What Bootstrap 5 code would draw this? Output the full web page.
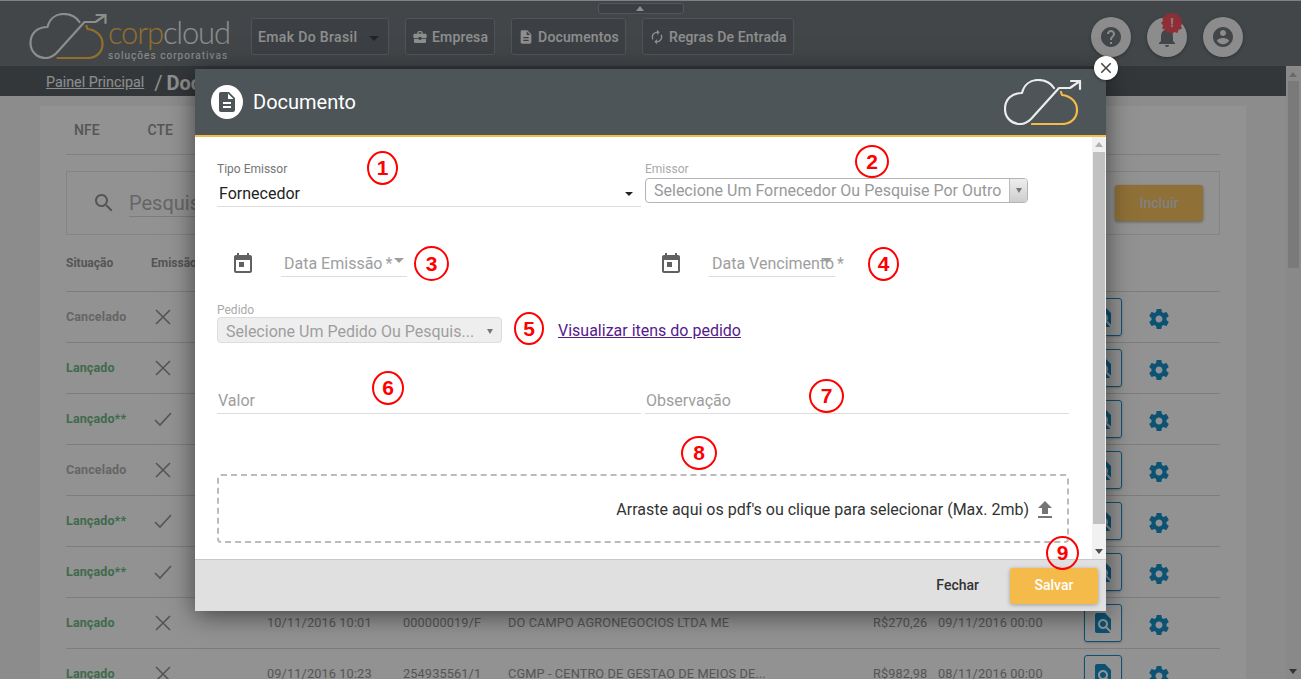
<!DOCTYPE html>
<html lang="pt-BR">
<head>
    <meta charset="UTF-8">
    <meta name="viewport" content="width=device-width, initial-scale=1.0">
    <title>Documento</title>
    <link href="https://cdn.jsdelivr.net/npm/bootstrap@5.3.2/dist/css/bootstrap.min.css" rel="stylesheet">
    <style>
        html, body { height: 100%; overflow: hidden; }
        body { font-family: Roboto, "Liberation Sans", sans-serif; background: #e9e9e9; position: relative; }

        /* topo da pagina */
        .top-bar { height: 66px; background: #6e767b; border-top: 1px solid #d8d8d8; position: relative; }
        .top-tab { position: absolute; left: 598px; top: 2px; width: 86px; height: 11px; border: 1px solid #8a9196; border-radius: 3px; background: #646a70; }
        .top-tab::after { content: ""; position: absolute; left: 37px; top: 2px; border: 4px solid transparent; border-top: 0; border-bottom: 5px solid #ededed; }
        .brand { width: 201px; margin-left: 29px; margin-top: 12px; height: 46px; }
        .brand-text { width: 122px; flex: none; }
        .brand-name { font-family: Lato, sans-serif; font-weight: 300; font-size: 31px; line-height: 34px; letter-spacing: -1.2px; color: #ececec; margin-top: 2px; }
        .brand-name b { font-weight: 300; color: #f4bb4a; }
        .brand-sub { font-size: 10px; line-height: 10px; letter-spacing: 1.05px; color: #ececec; margin-top: 2px; white-space: nowrap; }
        .cloud-line { fill: none; stroke: #ececec; stroke-width: 2.2; stroke-linecap: round; stroke-linejoin: round; }
        .cloud-gold { fill: none; stroke: #f4bb4a; stroke-width: 2.2; stroke-linecap: round; stroke-linejoin: round; }
        .top-nav { margin-left: 21px; margin-top: 17px; }
        .top-btn { height: 37px; background: #646a70; border: 1px solid #858c91; border-radius: 3px; color: #ededed; font-size: 14px; font-weight: 500; letter-spacing: .15px; padding: 2px 6px 0; display: flex; align-items: center; gap: 4px; white-space: nowrap; }
        .top-btn:first-child { width: 138px; justify-content: space-between; letter-spacing: .35px; }
        .top-btn svg { width: 16px; height: 16px; flex: none; fill: #ededed; margin-top: -2px; }
        .top-caret { border: 5px solid transparent; border-top: 5px solid #3a3d40; border-bottom: 0; margin: 2px 7px 0 8px; }
        .round-group { gap: 16px; margin-right: 58px; margin-top: 16px; }
        .round-btn { width: 40px; height: 40px; border-radius: 50%; background: #e9e9e9; display: flex; align-items: center; justify-content: center; position: relative; box-shadow: 0 1px 4px rgba(0,0,0,.3); }
        .round-btn svg { width: 24px; height: 24px; fill: #6e767b; }
        .round-btn .burst { position: absolute; left: 14px; top: -5px; width: 22px; height: 22px; fill: #ed4e5a; }
        .burst-mark { position: absolute; left: 14px; top: -5px; width: 22px; line-height: 22px; text-align: center; color: #f3d5d5; font-size: 13px; font-weight: 700; }

        .crumb-bar { height: 30px; background: #585d62; color: #ededed; padding: 4px 0 0 46px; margin-right: 15px; display: flex; align-items: center; white-space: nowrap; }
        .crumb-bar a { color: #ededed; font-size: 14.3px; }
        .crumb-bar span { font-size: 20px; margin-left: 10px; }
        .crumb-bar strong { font-size: 20px; margin-left: 4px; }

        /* conteudo atras do modal */
        .page-panel { margin: 10px 0 0 40px; width: 1206px; background: #f3f3f3; padding: 0 26px; }
        .tab-row { height: 49px; border-bottom: 1px solid #d8d8d8; padding-left: 8px; gap: 48px; color: #8e8e8e; font-size: 14px; font-weight: 500; }
        .search-box { height: 64px; margin-top: 16px; border: 1px solid #dcdcdc; padding: 0 16px 0 25px; }
        .search-box svg { width: 24px; height: 24px; fill: #8e8e8e; }
        .search-input { flex: 1; margin-left: 13px; font-size: 20px; color: #aaa; border-bottom: 1px solid #d0d0d0; line-height: 26px; }
        .add-btn { width: 88px; height: 36px; margin-left: 24px; background: #eebb5c; border-radius: 3px; color: #d8d8d8; font-size: 14px; font-weight: 500; box-shadow: 0 1px 3px rgba(0,0,0,.35); }
        .doc-table { table-layout: fixed; width: 1154px; margin: 0; --bs-table-bg: transparent; --bs-table-color: #8e8e8e; --bs-table-border-color: #d0d0d0; }
        .doc-table th, .doc-table td { padding: 0; vertical-align: middle; font-size: 12.75px; white-space: nowrap; overflow: hidden; }
        .doc-table thead th { height: 56px; color: #8e8e8e; font-weight: 700; font-size: 12px; }
        .doc-table td { height: 51px; letter-spacing: .12px; }
        .doc-table td.st-green { color: #69b27f; font-weight: 700; font-size: 12.5px; padding-top: 2px; }
        .doc-table td.st-gray { color: #aaa; font-weight: 700; font-size: 12.5px; padding-top: 2px; }
        .mark-x { width: 18px; height: 18px; stroke: #8e8e8e; stroke-width: 1.6; fill: none; margin-left: 3px; display: block; }
        .view-btn { width: 38px; height: 38px; margin-left: 1px; border: 1px solid #1589bf; border-radius: 3px; display: flex; align-items: center; justify-content: center; box-shadow: 0 1px 2px rgba(0,0,0,.2); }
        .view-btn svg { width: 24px; height: 24px; fill: #1589bf; }
        .gear-icon { width: 24px; height: 24px; fill: #1589bf; display: block; margin-left: -1px; position: relative; top: 2px; }
        .c-a { width: 85px; } .c-b { width: 116px; } .c-c { width: 136px; } .c-d { width: 105px; }
        .c-e { width: 365px; } .c-f { width: 65px; } .c-g { width: 145px; } .c-h { width: 65px; } .c-i { width: 72px; }

        .page-scroll { position: absolute; right: 0; top: 67px; bottom: 0; width: 15px; background: #e4e4e4; }
        .page-scroll i { position: absolute; left: 2px; top: 14px; width: 11px; height: 187px; background: #cbcbcb; }
        .page-scroll::before { content: ""; position: absolute; left: 3px; top: 5px; border: 4px solid transparent; border-top: 0; border-bottom: 5px solid #b0b0b0; }
        .page-scroll::after { content: ""; position: absolute; left: 3px; bottom: 5px; border: 4px solid transparent; border-bottom: 0; border-top: 5px solid #555; }

        .dim-layer { position: absolute; inset: 0; background: rgba(0,0,0,.4); }

        /* modal */
        .doc-modal { position: absolute; left: 195px; top: 69px; width: 911px; height: 542px; background: #fff; display: flex; flex-direction: column; box-shadow: 0 4px 24px rgba(0,0,0,.55); }
        .doc-head { height: 68px; flex: none; background: #4d5558; border-bottom: 2px solid #f4bb4a; padding: 0 24px 0 16px; color: #fff; }
        .doc-head-icon { width: 32px; height: 34px; border-radius: 50%; background: #fff; }
        .doc-head-icon svg { width: 24px; height: 24px; fill: #4d5558; }
        .doc-title { font-size: 20px; margin-left: 10px; }
        .doc-logo { width: 78px; height: 46px; margin-top: -1px; }
        .doc-logo .cloud-line { stroke: #fff; }
        .doc-logo .cloud-gold { stroke: #fbb62c; }
        .close-dot { position: absolute; right: -12px; top: -13px; width: 24px; height: 24px; border-radius: 50%; background: #fff; box-shadow: 0 1px 3px rgba(0,0,0,.4); }
        .close-dot svg { width: 18px; height: 18px; fill: #444; }
        .doc-body { flex: 1; min-height: 0; }
        .doc-form { flex: 1; padding: 25px 23px 0 22px; font-size: 16px; }
        .form-line { gap: 4px; }
        .form-col { width: 424px; flex: none; }
        .mini-label { font-size: 12px; line-height: 14px; color: #757575; display: block; }
        .mini-label.is-off { color: #aaa; }
        .type-select { height: 31px; border-bottom: 1px solid #ddd; padding: 5px 8px 0 2px; color: #222; }
        .small-caret { border: 4px solid transparent; border-top: 4px solid #222; border-bottom: 0; }
        .combo-box { height: 25px; width: 383px; margin-top: 2px; border: 1px solid #b4b4b4; border-radius: 4px; padding-left: 8px; color: #999; white-space: nowrap; overflow: hidden; }
        .combo-text { flex: 1; padding-top: 1px; }
        .combo-arrow { width: 18px; height: 24px; background: linear-gradient(#eee, #ccc); border-left: 1px solid #bbb; }
        .combo-arrow i, .order-box i { display: block; border: 3.5px solid transparent; border-top: 5px solid #777; border-bottom: 0; }
        .date-field { margin-top: 43px; height: 27px; }
        .date-col { width: 428px; flex: none; padding-left: 14px; }
        .date-col + .date-col { width: 424px; }
        .date-col > svg { width: 24px; height: 24px; fill: #616161; }
        .date-input { width: 126px; margin-left: 26px; height: 27px; border-bottom: 1px solid #ddd; color: #9e9e9e; padding: 0 0 0 3px; position: relative; white-space: nowrap; line-height: 28px; font-size: 16px; }
        .date-input i { position: absolute; right: 3px; top: 8px; border: 5px solid transparent; border-top: 5px solid #9e9e9e; border-bottom: 0; }
        .req-mark { margin-left: 3px; }
        .order-line { margin-top: 26px; }
        .order-box { width: 285px; height: 26px; background: #eee; border: 1px solid #ddd; border-radius: 4px; color: #9e9e9e; padding: 3px 8px 0; white-space: nowrap; }
        .order-link { color: #551a8b; font-size: 16px; margin-left: 56px; position: relative; top: 1px; }
        .plain-field { height: 27px; border-bottom: 1px solid #ddd; color: #9e9e9e; padding-left: 1px; line-height: 27px; }
        .value-line { margin-top: 44px; }
        .drop-zone { margin-top: 60px; height: 69px; border: 2px dashed #bbb; border-radius: 4px; padding: 2px 10px 0 0; color: #333; font-size: 16px; gap: 4px; }
        .drop-zone svg { width: 24px; height: 24px; fill: #757575; }
        .fake-scroll { width: 14px; flex: none; background: #f1f1f1; position: relative; }
        .fake-scroll i { position: absolute; left: 1px; top: 15px; width: 12px; height: 372px; background: #c1c1c1; }
        .fake-scroll::before { content: ""; position: absolute; left: 3px; top: 5px; border: 4px solid transparent; border-top: 0; border-bottom: 5px solid #b0b0b0; }
        .fake-scroll::after { content: ""; position: absolute; left: 3px; bottom: 5px; border: 4px solid transparent; border-bottom: 0; border-top: 5px solid #505050; }
        .doc-foot { height: 52px; flex: none; background: #e0e0e0; border-top: 1px solid #c8c8c8; padding-right: 8px; gap: 31px; font-size: 14px; font-weight: 500; }
        .foot-close { color: #333; }
        .foot-save { width: 88px; height: 36px; background: #f4bb4a; color: #fff; border-radius: 3px; box-shadow: 0 1px 4px rgba(0,0,0,.3); }

        /* numeros marcados a mao */
        .ann { position: absolute; width: 31px; height: 34px; border: 2px solid #f00; border-radius: 50%; color: #f00; font: 700 21px/30px "Liberation Sans", sans-serif; text-align: center; background: #fff; }
        .ann-1 { left: 172px; top: 82px; }
        .ann-2 { left: 660px; top: 76px; width: 34px; height: 33px; }
        .ann-3 { left: 219px; top: 177px; width: 35px; height: 35px; line-height: 31px; }
        .ann-4 { left: 673px; top: 178px; }
        .ann-5 { left: 319px; top: 243px; width: 30px; height: 33px; }
        .ann-6 { left: 177px; top: 302px; width: 32px; }
        .ann-7 { left: 614px; top: 310px; width: 35px; }
        .ann-8 { left: 486px; top: 367px; width: 36px; }
        .ann-9 { left: 851px; top: 467px; width: 33px; z-index: 2; background: transparent; }
    </style>
</head>
<body>

<svg width="0" height="0" class="d-block position-absolute">
    <symbol id="i-doc" viewBox="0 0 24 24"><path d="M14 2H6c-1.1 0-1.99.9-1.99 2L4 20c0 1.1.89 2 1.99 2H18c1.1 0 2-.9 2-2V8l-6-6zm2 16H8v-2h8v2zm0-4H8v-2h8v2zm-3-5V3.5L18.5 9H13z"/></symbol>
    <symbol id="i-cal" viewBox="0 0 24 24"><path d="M16 1v2H8V1H6v2H5c-1.11 0-2 .9-2 2v14c0 1.1.89 2 2 2h14c1.1 0 2-.9 2-2V5c0-1.1-.9-2-2-2h-1V1h-2zm3 18H5V8h14v11zM8 10h5v5H8z"/></symbol>
    <symbol id="i-find" viewBox="0 0 24 24"><path d="M20 19.59V8l-6-6H6c-1.1 0-1.99.9-1.99 2L4 20c0 1.1.89 2 1.99 2H18c.45 0 .85-.15 1.19-.4l-4.43-4.43c-.8.52-1.74.83-2.76.83-2.76 0-5-2.24-5-5s2.24-5 5-5 5 2.24 5 5c0 1.02-.31 1.96-.83 2.75L20 19.59zM9 13c0 1.66 1.34 3 3 3s3-1.34 3-3-1.34-3-3-3-3 1.34-3 3z"/></symbol>
    <symbol id="i-gear" viewBox="0 0 24 24"><path d="M19.43 12.98c.04-.32.07-.64.07-.98s-.03-.66-.07-.98l2.11-1.65c.19-.15.24-.42.12-.64l-2-3.46c-.12-.22-.39-.3-.61-.22l-2.49 1c-.52-.4-1.08-.73-1.69-.98l-.38-2.65C14.46 2.18 14.25 2 14 2h-4c-.25 0-.46.18-.49.42l-.38 2.65c-.61.25-1.17.59-1.69.98l-2.49-1c-.23-.09-.49 0-.61.22l-2 3.46c-.13.22-.07.49.12.64l2.11 1.65c-.04.32-.07.65-.07.98s.03.66.07.98l-2.11 1.65c-.19.15-.24.42-.12.64l2 3.46c.12.22.39.3.61.22l2.49-1c.52.4 1.08.73 1.69.98l.38 2.65c.03.24.24.42.49.42h4c.25 0 .46-.18.49-.42l.38-2.65c.61-.25 1.17-.59 1.69-.98l2.49 1c.23.09.49 0 .61-.22l2-3.46c.12-.22.07-.49-.12-.64l-2.11-1.65zM12 15.5c-1.93 0-3.5-1.57-3.5-3.5s1.57-3.5 3.5-3.5 3.5 1.57 3.5 3.5-1.57 3.5-3.5 3.5z"/></symbol>
    <symbol id="i-cloud" viewBox="0 0 78 46">
        <path class="cloud-line" d="M50 9C46 3 40 1 34 1 26 1 20 6 18 14 8 14 1 20 1 30 1 39 8 45 16 45 21 45 24 43 27 40L55 9H66L76 2M67 2H76V10"/>
        <path class="cloud-gold" d="M28 45H58C67 45 73 39 73 31 73 22 66 17 58 16L57 13"/>
    </symbol>
</svg>

<header class="top-bar d-flex align-items-start">
    <div class="top-tab"></div>
    <div class="brand d-flex">
        <svg class="flex-shrink-0" width="79" height="46"><use href="#i-cloud"/></svg>
        <div class="brand-text">
            <div class="brand-name"><b>corp</b>cloud</div>
            <div class="brand-sub">soluções corporativas</div>
        </div>
    </div>
    <nav class="d-flex gap-3 top-nav">
        <div class="top-btn">Emak Do Brasil <span class="top-caret"></span></div>
        <div class="top-btn">
            <svg viewBox="0 0 24 24"><path d="M10 16v-1H3.01L3 19c0 1.11.89 2 2 2h14c1.11 0 2-.89 2-2v-4h-7v1h-4zm10-9h-4.01V5l-2-2h-4l-2 2v2H4c-1.1 0-2 .9-2 2v3c0 1.11.89 2 2 2h6v-2h4v2h6c1.1 0 2-.9 2-2V9c0-1.1-.9-2-2-2zm-6 0h-4V5h4v2z"/></svg>Empresa
        </div>
        <div class="top-btn"><svg><use href="#i-doc"/></svg>Documentos</div>
        <div class="top-btn">
            <svg viewBox="0 0 24 24"><path d="M12 6v3l4-4-4-4v3c-4.42 0-8 3.58-8 8 0 1.57.46 3.03 1.24 4.26L6.7 14.8c-.45-.83-.7-1.79-.7-2.8 0-3.31 2.69-6 6-6zm6.76 1.74L17.3 9.2c.44.84.7 1.79.7 2.8 0 3.31-2.69 6-6 6v-3l-4 4 4 4v-3c4.42 0 8-3.58 8-8 0-1.57-.46-3.03-1.24-4.26z"/></svg>Regras De Entrada
        </div>
    </nav>
    <div class="d-flex ms-auto round-group">
        <div class="round-btn">
            <svg viewBox="0 0 24 24"><path d="M12 2C6.48 2 2 6.48 2 12s4.48 10 10 10 10-4.48 10-10S17.52 2 12 2zm1 17h-2v-2h2v2zm2.07-7.75l-.9.92C13.45 12.9 13 13.5 13 15h-2v-.5c0-1.1.45-2.1 1.17-2.83l1.24-1.26c.37-.36.59-.86.59-1.41 0-1.1-.9-2-2-2s-2 .9-2 2H8c0-2.21 1.79-4 4-4s4 1.79 4 4c0 .88-.36 1.68-.93 2.25z"/></svg>
        </div>
        <div class="round-btn">
            <svg viewBox="0 0 24 24"><path d="M12 22c1.1 0 2-.9 2-2h-4c0 1.1.89 2 2 2zm6-6v-5c0-3.07-1.64-5.64-4.5-6.32V4c0-.83-.67-1.5-1.5-1.5s-1.5.67-1.5 1.5v.68C7.63 5.36 6 7.92 6 11v5l-2 2v1h16v-1l-2-2z"/></svg>
            <svg class="burst" viewBox="0 0 22 22"><path d="M11 0l2.400 2.600L16.500 1.500l1 3.400 3.400 1-1 3.300L22 11l-2.100 2.400 1 3.300-3.400 1-1 3.400-3.100-1.100L11 22l-2.400-2.000-3.100 1.100-1-3.400-3.400-1 1-3.300L0 11l2.100-2.400-1-3.300 3.400-1 1-3.400 3.100 1.100z"/></svg>
            <span class="burst-mark">!</span>
        </div>
        <div class="round-btn">
            <svg viewBox="0 0 24 24"><path d="M12 2C6.48 2 2 6.48 2 12s4.48 10 10 10 10-4.48 10-10S17.52 2 12 2zm0 3c1.66 0 3 1.34 3 3s-1.34 3-3 3-3-1.34-3-3 1.34-3 3-3zm0 14.2c-2.5 0-4.71-1.28-6-3.22.03-1.99 4-3.08 6-3.08 1.99 0 5.97 1.09 6 3.08-1.29 1.94-3.5 3.22-6 3.22z"/></svg>
        </div>
    </div>
</header>

<div class="crumb-bar">
    <a href="#">Painel Principal</a><span>/</span><strong>Documentos</strong>
</div>

<main class="page-panel">
    <div class="tab-row d-flex align-items-center">
        <span>NFE</span>
        <span>CTE</span>
    </div>
    <div class="search-box d-flex align-items-center">
        <svg viewBox="0 0 24 24"><path d="M15.5 14h-.79l-.28-.27C15.41 12.59 16 11.11 16 9.5 16 5.91 13.09 3 9.5 3S3 5.91 3 9.5 5.91 16 9.5 16c1.61 0 3.09-.59 4.23-1.57l.27.28v.79l5 4.99L20.49 19l-4.99-5zm-6 0C7.01 14 5 11.99 5 9.5S7.01 5 9.5 5 14 7.01 14 9.5 11.99 14 9.5 14z"/></svg>
        <div class="search-input">Pesquisar</div>
        <div class="add-btn d-flex align-items-center justify-content-center">Incluir</div>
    </div>
    <table class="table doc-table">
        <colgroup>
            <col class="c-a"><col class="c-b"><col class="c-c"><col class="c-d"><col class="c-e"><col class="c-f"><col class="c-g"><col class="c-h"><col class="c-i">
        </colgroup>
        <thead>
            <tr><th>Situação</th><th>Emissão</th><th></th><th></th><th></th><th></th><th></th><th></th><th></th></tr>
        </thead>
        <tbody id="docRows"></tbody>
    </table>
</main>

<div class="page-scroll"><i></i></div>
<div class="dim-layer"></div>

<section class="doc-modal">
    <div class="doc-head d-flex align-items-center">
        <div class="doc-head-icon d-flex align-items-center justify-content-center"><svg><use href="#i-doc"/></svg></div>
        <div class="doc-title">Documento</div>
        <svg class="doc-logo ms-auto"><use href="#i-cloud"/></svg>
    </div>
    <div class="close-dot d-flex align-items-center justify-content-center">
        <svg viewBox="0 0 24 24"><path d="M19 6.41L17.59 5 12 10.59 6.41 5 5 6.41 10.59 12 5 17.59 6.41 19 12 13.41 17.59 19 19 17.59 13.41 12z"/></svg>
    </div>

    <div class="doc-body d-flex">
        <form class="doc-form">
            <div class="d-flex form-line">
                <div class="form-col">
                    <label class="mini-label">Tipo Emissor</label>
                    <div class="type-select d-flex align-items-center justify-content-between">Fornecedor <span class="small-caret"></span></div>
                </div>
                <div class="form-col">
                    <label class="mini-label is-off">Emissor</label>
                    <div class="combo-box d-flex align-items-center">
                        <span class="combo-text">Selecione Um Fornecedor Ou Pesquise Por Outro</span>
                        <span class="combo-arrow d-flex align-items-center justify-content-center"><i></i></span>
                    </div>
                </div>
            </div>

            <div class="d-flex date-field">
                <div class="date-col d-flex align-items-center">
                    <svg><use href="#i-cal"/></svg>
                    <div class="date-input">Data Emissão<span class="req-mark">*</span><i></i></div>
                </div>
                <div class="date-col d-flex align-items-center">
                    <svg><use href="#i-cal"/></svg>
                    <div class="date-input">Data Vencimento<span class="req-mark">*</span><i></i></div>
                </div>
            </div>

            <div class="order-line">
                <label class="mini-label is-off">Pedido</label>
                <div class="d-flex align-items-center">
                    <div class="order-box d-flex align-items-center justify-content-between">Selecione Um Pedido Ou Pesquis... <i></i></div>
                    <a class="order-link" href="#">Visualizar itens do pedido</a>
                </div>
            </div>

            <div class="d-flex form-line value-line">
                <div class="form-col plain-field">Valor</div>
                <div class="form-col plain-field">Observação</div>
            </div>

            <div class="drop-zone d-flex align-items-center justify-content-end">
                Arraste aqui os pdf's ou clique para selecionar (Max. 2mb)
                <svg viewBox="0 0 24 24"><path d="M9 16h6v-6h4l-7-7-7 7h4zm-4 2h14v2H5z"/></svg>
            </div>
        </form>
        <div class="fake-scroll"><i></i></div>
    </div>

    <div class="doc-foot d-flex align-items-center justify-content-end">
        <span class="foot-close">Fechar</span>
        <div class="foot-save d-flex align-items-center justify-content-center">Salvar</div>
    </div>

    <span class="ann ann-1">1</span>
    <span class="ann ann-2">2</span>
    <span class="ann ann-3">3</span>
    <span class="ann ann-4">4</span>
    <span class="ann ann-5">5</span>
    <span class="ann ann-6">6</span>
    <span class="ann ann-7">7</span>
    <span class="ann ann-8">8</span>
    <span class="ann ann-9">9</span>
</section>

<script>
// linhas da tabela atras do modal
const rows = [
    ['Cancelado', 0, 0],
    ['Lançado', 1, 0],
    ['Lançado**', 1, 1],
    ['Cancelado', 0, 0],
    ['Lançado**', 1, 1],
    ['Lançado**', 1, 1],
    ['Lançado', 1, 0, '10/11/2016 10:01', '000000019/F', 'DO CAMPO AGRONEGOCIOS LTDA ME', 'R$270,26', '09/11/2016 00:00'],
    ['Lançado', 1, 0, '09/11/2016 10:23', '254935561/1', 'CGMP - CENTRO DE GESTAO DE MEIOS DE...', 'R$982,98', '08/11/2016 00:00']
];
const xMark = '<svg class="mark-x" viewBox="0 0 18 18"><path d="M2 2l14 14M16 2L2 16"/></svg>';
const okMark = '<svg class="mark-x" viewBox="0 0 18 18"><path d="M1 10l5 5L17 3"/></svg>';
document.getElementById('docRows').innerHTML = rows.map(r => `
    <tr>
        <td class="${r[1] ? 'st-green' : 'st-gray'}">${r[0]}</td>
        <td>${r[2] ? okMark : xMark}</td>
        <td>${r[3] || ''}</td>
        <td>${r[4] || ''}</td>
        <td>${r[5] || ''}</td>
        <td>${r[6] || ''}</td>
        <td>${r[7] || ''}</td>
        <td><div class="view-btn"><svg><use href="#i-find"/></svg></div></td>
        <td><svg class="gear-icon"><use href="#i-gear"/></svg></td>
    </tr>`).join('');
</script>

<script src="https://cdn.jsdelivr.net/npm/bootstrap@5.3.2/dist/js/bootstrap.bundle.min.js"></script>
</body>
</html>
